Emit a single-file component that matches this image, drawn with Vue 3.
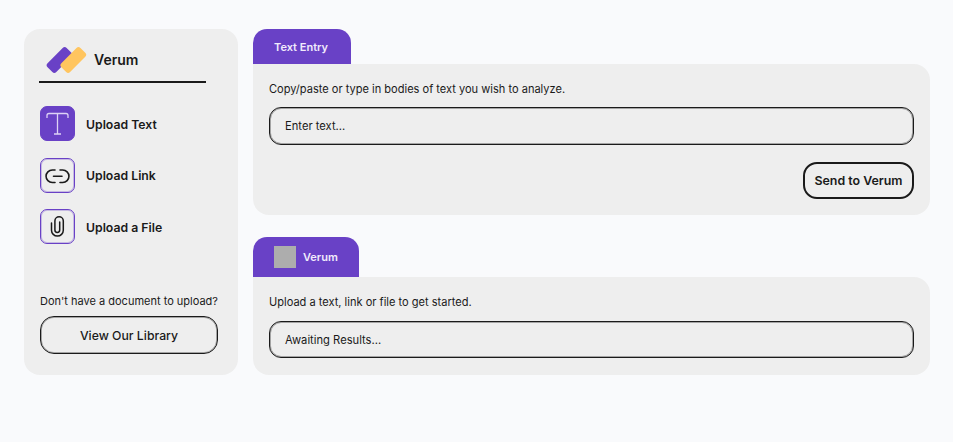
<template>
  <div class="page">
    <aside class="sidebar">
      <div class="brand">
        <svg class="brand-logo" width="42" height="28" viewBox="0 0 42 28">
          <rect x="-13.5" y="-6.2" width="27" height="12.4" rx="2.8" transform="translate(13.5 14) rotate(-45)" fill="#6941c6" />
          <rect x="-13.5" y="-6.2" width="27" height="12.4" rx="2.8" transform="translate(27.3 14) rotate(-45)" fill="#ffc55f" />
        </svg>
        <span class="brand-name">Verum</span>
      </div>

      <nav class="nav">
        <div v-for="item in navItems" :key="item.label" class="nav-item">
          <span class="nav-icon" :class="{ active: item.active }">
            <svg v-if="item.icon === 'text'" width="27" height="27" viewBox="0 0 27 27" fill="none" stroke="#ddd2f5" stroke-width="1.3">
              <path d="M3 8V5.5Q3 3.5 5 3.5H22Q24 3.5 24 5.5V8M13.5 3.5V24M10 24H17" />
            </svg>
            <svg v-else-if="item.icon === 'link'" width="27" height="27" viewBox="0 0 27 27" fill="none" stroke="#1a1a1a" stroke-width="1.6" stroke-linecap="round">
              <path d="M11 8H8.3a6.25 6.25 0 0 0 0 12.5H11M16 8h2.7a6.25 6.25 0 0 1 0 12.5H16M9.5 14.25H18" />
            </svg>
            <svg v-else width="27" height="27" viewBox="0 0 27 27" fill="none" stroke="#1a1a1a" stroke-width="1.5" stroke-linecap="round">
              <path d="M7.5 10V17.2a5.9 5.9 0 0 0 11.8 0V8a4.2 4.2 0 0 0-8.4 0V17a2.4 2.4 0 0 0 4.8 0V9" />
            </svg>
          </span>
          <span class="nav-label">{{ item.label }}</span>
        </div>
      </nav>

      <div class="library">
        <p class="library-text">Don't have a document to upload?</p>
        <button class="library-btn">View Our Library</button>
      </div>
    </aside>

    <main class="main">
      <section class="section">
        <div class="tab tab-entry">Text Entry</div>
        <div class="panel panel-entry">
          <p class="panel-text">Copy/paste or type in bodies of text you wish to analyze.</p>
          <div class="field">Enter text...</div>
          <div class="actions">
            <button class="send-btn">Send to Verum</button>
          </div>
        </div>
      </section>

      <section class="section">
        <div class="tab tab-result">
          <span class="tab-thumb"></span>
          Verum
        </div>
        <div class="panel panel-result">
          <p class="panel-text">Upload a text, link or file to get started.</p>
          <div class="field">Awaiting Results...</div>
        </div>
      </section>
    </main>
  </div>
</template>

<script setup>
const navItems = [
  { label: 'Upload Text', icon: 'text', active: true },
  { label: 'Upload Link', icon: 'link', active: false },
  { label: 'Upload a File', icon: 'file', active: false }
]
</script>

<style>
html, body {
  background: #f9fafc;
}
</style>

<style scoped>
.page {
  display: flex;
  gap: 15px;
  height: 442px;
  box-sizing: border-box;
  padding: 29px 23px 0 24px;
  font-family: Inter, "Liberation Sans", sans-serif;
  color: #1a1a1a;
}

.sidebar {
  width: 214px;
  height: 346px;
  box-sizing: border-box;
  flex-shrink: 0;
  display: flex;
  flex-direction: column;
  padding: 0 20px 21px 15px;
  background: #eeeeee;
  border-radius: 16px;
}

.brand {
  display: flex;
  align-items: center;
  gap: 6px;
  width: 167px;
  height: 54px;
  box-sizing: border-box;
  padding: 9px 0 0 7px;
  border-bottom: 2px solid #1a1a1a;
}

.brand-name {
  font-size: 14px;
  font-weight: 600;
}

.nav {
  display: flex;
  flex-direction: column;
  gap: 16.5px;
  margin-top: 23px;
  padding-left: 1px;
}

.nav-item {
  display: flex;
  align-items: center;
  gap: 11px;
}

.nav-icon {
  width: 35px;
  height: 35px;
  box-sizing: border-box;
  display: flex;
  align-items: center;
  justify-content: center;
  border: 1px solid #6941c6;
  border-radius: 7px;
  box-shadow: inset 0 0 0 1px rgba(105, 65, 198, 0.3);
}

.nav-icon.active {
  background: #6941c6;
}

.nav-label {
  padding-top: 1px;
  font-size: 12.25px;
  font-weight: 600;
}

.library {
  margin-top: auto;
  padding-left: 1px;
}

.library-text {
  margin: 0 0 8px;
  font-size: 11px;
  line-height: 14px;
  white-space: nowrap;
}

.library-btn {
  width: 178px;
  height: 38px;
  background: transparent;
  border: 1px solid #1a1a1a;
  border-radius: 14px;
  box-shadow: inset 0 0 0 1px rgba(26, 26, 26, 0.35);
  font-family: inherit;
  font-size: 12.25px;
  font-weight: 500;
  color: #1a1a1a;
}

.main {
  flex: 1;
  display: flex;
  flex-direction: column;
  gap: 22px;
}

.section {
  display: flex;
  flex-direction: column;
  align-items: flex-start;
}

.tab {
  display: flex;
  align-items: center;
  box-sizing: border-box;
  background: #6941c6;
  color: #f1ebfc;
  font-size: 11px;
  font-weight: 600;
  border-radius: 14px 14px 0 0;
}

.tab-entry {
  width: 98px;
  height: 35px;
  padding-left: 21px;
}

.tab-result {
  width: 106px;
  height: 40px;
  padding-left: 21px;
  gap: 7px;
}

.tab-thumb {
  width: 22px;
  height: 22px;
  background: #adadad;
}

.panel {
  width: 100%;
  box-sizing: border-box;
  padding: 18px 16px 0;
  background: #eeeeee;
  border-radius: 0 16px 16px 16px;
}

.panel-entry {
  height: 151px;
}

.panel-result {
  height: 98px;
}

.panel-text {
  margin: 0 0 11px;
  font-size: 11.05px;
  line-height: 14px;
}

.panel-result .panel-text {
  margin-bottom: 12px;
}

.field {
  height: 38px;
  box-sizing: border-box;
  display: flex;
  align-items: center;
  padding-left: 15px;
  border: 1px solid #1a1a1a;
  border-radius: 12px;
  box-shadow: inset 0 0 0 1px rgba(26, 26, 26, 0.35);
  font-size: 11.2px;
}

.panel-result .field {
  height: 37px;
}

.actions {
  display: flex;
  justify-content: flex-end;
  margin-top: 17px;
}

.send-btn {
  width: 111px;
  height: 37px;
  padding: 0;
  background: transparent;
  border: 2px solid #1a1a1a;
  border-radius: 14px;
  font-family: inherit;
  font-size: 12.4px;
  font-weight: 600;
  color: #1a1a1a;
}
</style>
